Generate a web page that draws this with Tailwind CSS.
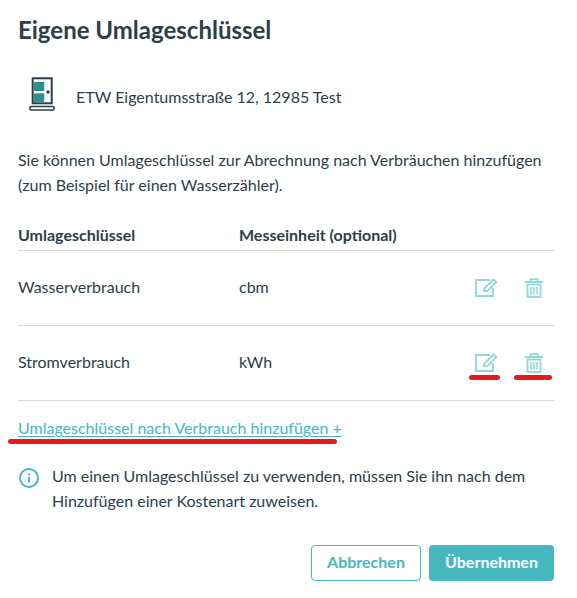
<!DOCTYPE html>
<html><head><meta charset="utf-8"><script src="https://cdn.jsdelivr.net/npm/@tailwindcss/browser@4"></script></head>
<body class="bg-white font-['Lato',sans-serif] text-[#2c3e4a] text-[16px] leading-[25px] w-[577px] h-[598px] overflow-hidden">
<div class="pl-[18px] pr-[23px] pt-[15px] flex flex-col">
  <h1 class="text-[24px] leading-[30px] font-bold">Eigene Umlageschlüssel</h1>
  <div class="flex items-center mt-[32px] h-[40px]">
    <svg width="28" height="36" viewBox="0 0 28 36" class="ml-[10px] self-start -mt-[1px] shrink-0">
      <rect x="4.700" y="2.300" width="19" height="25" fill="none" stroke="#2f3e46" stroke-width="2"/>
      <rect x="6" y="6" width="10.300" height="9" fill="#2f8f8f"/>
      <rect x="6" y="17.300" width="10.300" height="9" fill="#2f8f8f"/>
      <circle cx="20" cy="16" r="1.700" fill="#2f3e46"/>
      <rect x="2" y="30.500" width="24" height="3.500" rx="1" fill="none" stroke="#2f3e46" stroke-width="1.600"/>
    </svg>
    <span class="ml-[20px] pb-[1px]">ETW Eigentumsstraße 12, 12985 Test</span>
  </div>
  <p class="mt-[30px]">Sie können Umlageschlüssel zur Abrechnung nach Verbräuchen hinzufügen<br>(zum Beispiel für einen Wasserzähler).</p>
  <div class="mt-[25px] flex h-[29px] items-center font-bold border-b border-[#d9d9d9] pb-[3px]">
    <span class="w-[221px]">Umlageschlüssel</span><span>Messeinheit (optional)</span>
  </div>
  <div class="flex h-[75px] items-center border-b border-[#d9d9d9]">
    <span class="w-[221px] mb-[3px]">Wasserverbrauch</span><span class="mb-[3px]">cbm</span>
    <div class="ml-auto flex items-center gap-[27px] pr-[11px]">
      <svg width="23" height="20" viewBox="0 0 23 20" fill="none" stroke="#8ed8dc" stroke-width="1.800"><path d="M18 10V18H1V2H15"/><path d="M9 13l.7-3L18.500 1.500l2.800 2.700-8.800 8.600z"/></svg>
      <svg width="18" height="20" viewBox="0 0 18 20" fill="none" stroke="#8ed8dc" stroke-width="1.800"><path d="M0 4h18M5.500 3.500V1.200h7v2.300"/><rect x="2.500" y="6.500" width="13" height="12.500"/><path d="M6 9v7.500M9 9v7.500M12 9v7.500" stroke-width="1.500"/></svg>
    </div>
  </div>
  <div class="flex h-[75px] items-center border-b border-[#d9d9d9]">
    <span class="w-[221px] mb-[3px]">Stromverbrauch</span><span class="mb-[3px]">kWh</span>
    <div class="ml-auto flex items-center gap-[27px] pr-[11px]">
      <svg width="23" height="20" viewBox="0 0 23 20" fill="none" stroke="#8ed8dc" stroke-width="1.800"><path d="M18 10V18H1V2H15"/><path d="M9 13l.7-3L18.500 1.500l2.800 2.700-8.800 8.600z"/></svg>
      <svg width="18" height="20" viewBox="0 0 18 20" fill="none" stroke="#8ed8dc" stroke-width="1.800"><path d="M0 4h18M5.500 3.500V1.200h7v2.300"/><rect x="2.500" y="6.500" width="13" height="12.500"/><path d="M6 9v7.500M9 9v7.500M12 9v7.500" stroke-width="1.500"/></svg>
    </div>
  </div>
  <a class="mt-[14px] text-[#45b8c0] underline underline-offset-2 w-fit">Umlageschlüssel nach Verbrauch hinzufügen +</a>
  <div class="flex mt-[23px] ml-[1px]">
    <svg width="20" height="20" viewBox="0 0 20 20" fill="none" class="mt-[5px] shrink-0"><circle cx="10" cy="10" r="9" stroke="#45b8c0" stroke-width="2"/><rect x="9" y="9" width="2" height="5.500" fill="#45b8c0"/><rect x="9" y="5.500" width="2" height="2" fill="#45b8c0"/></svg>
    <p class="ml-[13px]">Um einen Umlageschlüssel zu verwenden, müssen Sie ihn nach dem<br>Hinzufügen einer Kostenart zuweisen.</p>
  </div>
  <div class="flex justify-end gap-[8px] mt-[32px] font-bold">
    <button class="w-[110px] h-[36px] rounded-[4px] border border-[#45b8c0] text-[#45b8c0] pb-[3px]">Abbrechen</button>
    <button class="w-[125px] h-[36px] rounded-[4px] bg-[#45b8c0] text-white pb-[3px]">Übernehmen</button>
  </div>
</div>
<div class="absolute left-[469px] top-[375px] w-[31px] h-[5px] rounded-full bg-[#e8191c]"></div>
<div class="absolute left-[514px] top-[375px] w-[38px] h-[5px] rounded-full bg-[#e8191c]"></div>
<div class="absolute left-[8px] top-[439px] w-[329px] h-[5px] rounded-full bg-[#e8191c]"></div>
</body></html>
